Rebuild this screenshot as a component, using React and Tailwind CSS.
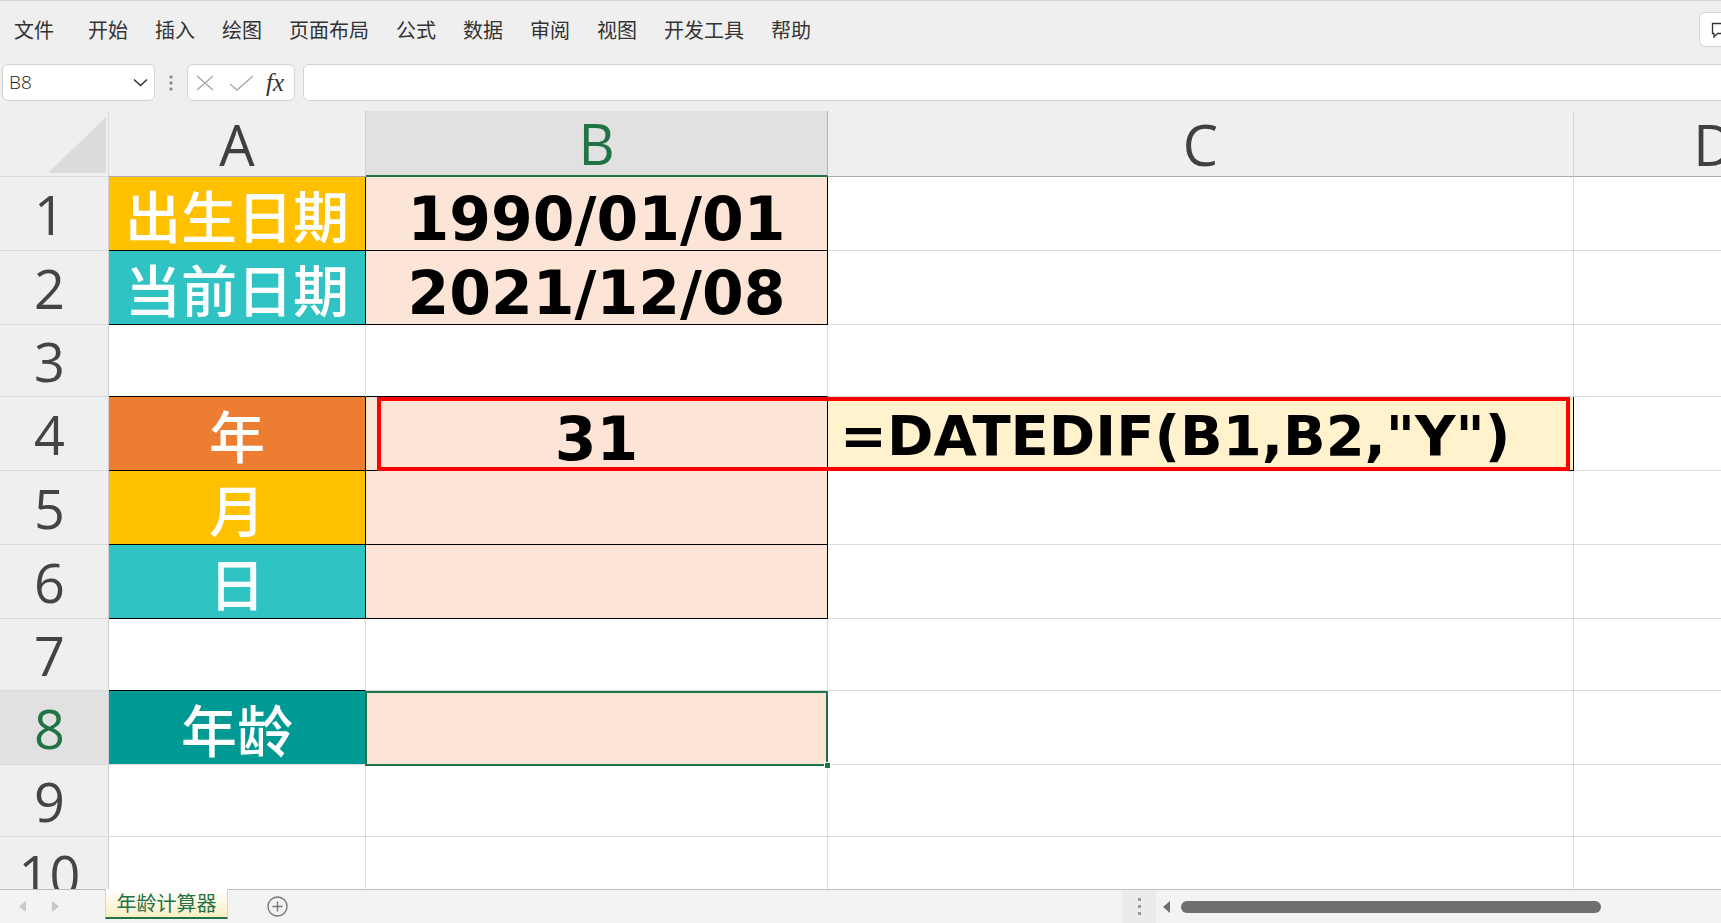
import React from "react";

const cjk = "font-['Noto_Sans_CJK_SC',sans-serif]";
const label =
  "flex items-center justify-center text-white font-['Noto_Sans_CJK_SC',sans-serif] font-medium text-[56px] leading-none";
const num =
  "flex items-center justify-center pt-[10px] text-black font-['DejaVu_Sans',sans-serif] font-bold text-[60px] leading-none";

function RowHeader({ n, active }) {
  return (
    <div
      className={`w-[109px] shrink-0 h-full flex items-center justify-center pr-[9px] border-r border-b border-r-[#cfcfcf] border-b-[#d9d9d9] font-['Open_Sans',sans-serif] text-[54px] leading-none ${
        active ? "bg-[#e1e1e1] text-[#217346]" : "bg-[#efefef] text-[#444444]"
      }`}
    >
      {n}
    </div>
  );
}

function Cell({ w, cls, children }) {
  return <div className={`${w} shrink-0 h-full border-r border-b ${cls}`}>{children}</div>;
}

const G = "border-r-[#dadada] border-b-[#dadada] bg-white";
const GB = "border-r-[#dadada] border-b-black bg-white";

function Row({ h, n, active, a, b, c }) {
  return (
    <div className={`flex ${h} shrink-0`}>
      <RowHeader n={n} active={active} />
      {a}
      {b}
      {c || <Cell w="w-[746px]" cls={G} />}
      <Cell w="w-[300px]" cls={G} />
    </div>
  );
}

export default function App() {
  return (
    <div className={`w-[1721px] h-[923px] overflow-hidden bg-[#efefef] flex flex-col ${cjk}`}>
      {/* Menu bar */}
      <div className="h-[58px] shrink-0 border-t border-[#d6d6d6] flex items-center pl-[14px] text-[20px] text-[#333333] gap-[27px]">
        <span className="mr-[7px]">文件</span>
        <span>开始</span>
        <span>插入</span>
        <span>绘图</span>
        <span>页面布局</span>
        <span>公式</span>
        <span>数据</span>
        <span>审阅</span>
        <span>视图</span>
        <span>开发工具</span>
        <span>帮助</span>
        <div className="ml-auto -mr-[20px] w-[42px] h-[35px] bg-white border border-[#d4d4d4] rounded-[6px] flex items-center pl-[11px]">
          <svg width="18" height="18" viewBox="0 0 18 18" fill="none" stroke="#333" strokeWidth="1.3">
            <path d="M1.5 2.5h15v10h-10l-3.5 3.5v-3.5h-1.5z" />
          </svg>
        </div>
      </div>

      {/* Formula bar */}
      <div className="mt-[6px] h-[37px] shrink-0 flex items-stretch">
        <div className="ml-[2px] w-[153px] bg-white border border-[#d4d4d4] rounded-[6px] flex items-center pl-[6px] pr-[6px]">
          <span className="font-['Open_Sans',sans-serif] font-light text-[19px] text-[#222] leading-none">B8</span>
          <svg className="ml-auto" width="15" height="9" viewBox="0 0 15 9" fill="none" stroke="#333" strokeWidth="1.6">
            <path d="M1 1.5l6.5 6 6.5-6" />
          </svg>
        </div>
        <div className="w-[32px] flex items-center justify-center">
          <svg width="4" height="16" viewBox="0 0 4 16" fill="#8a8a8a">
            <rect x="0.5" y="0.5" width="3" height="3" rx="1" />
            <rect x="0.5" y="6.5" width="3" height="3" rx="1" />
            <rect x="0.5" y="12.5" width="3" height="3" rx="1" />
          </svg>
        </div>
        <div className="w-[108px] bg-white border border-[#d4d4d4] rounded-[6px] flex items-center">
          <svg className="ml-[8px]" width="18" height="16" viewBox="0 0 18 16" fill="none" stroke="#a8a8a8" strokeWidth="1.4">
            <path d="M1 1l16 14M17 1L1 15" />
          </svg>
          <svg className="ml-[15px]" width="25" height="16" viewBox="0 0 25 16" fill="none" stroke="#a8a8a8" strokeWidth="1.4">
            <path d="M1 9l7 6L24 1" />
          </svg>
          <span className="ml-[12px] font-['Liberation_Serif',serif] italic text-[25px] text-[#333] leading-none">
            fx
          </span>
        </div>
        <div className="ml-[8px] flex-1 -mr-[6px] bg-white border border-[#d4d4d4] rounded-[6px]" />
      </div>

      {/* Grid */}
      <div className="mt-[10px] h-[778px] shrink-0 overflow-hidden flex flex-col">
        {/* column headers */}
        <div className="flex h-[66px] shrink-0 font-['Open_Sans',sans-serif] text-[56px] leading-none text-[#404040]">
          <div className="w-[109px] shrink-0 h-full border-r border-b border-[#d9d9d9] bg-[#efefef] relative">
            <svg className="absolute left-0 top-0" width="109" height="66" viewBox="0 0 109 66">
              <path d="M48 62L106 6V62Z" fill="#dcdcdc" />
            </svg>
          </div>
          <div className="w-[257px] shrink-0 h-full border-r border-b border-r-[#cfcfcf] border-b-[#ababab] bg-[#efefef] flex items-center justify-center">
            A
          </div>
          <div className="w-[462px] shrink-0 h-full border-r border-b-2 border-r-[#b5b5b5] border-b-[#217346] bg-[#e1e1e1] flex items-center justify-center text-[#217346]">
            B
          </div>
          <div className="w-[746px] shrink-0 h-full border-r border-b border-r-[#d4d4d4] border-b-[#ababab] bg-[#efefef] flex items-center justify-center">
            C
          </div>
          <div className="w-[300px] shrink-0 h-full border-r border-b border-r-[#d4d4d4] border-b-[#ababab] bg-[#efefef] flex items-center justify-center pr-[20px]">
            D
          </div>
        </div>

        <Row
          h="h-[74px]"
          n="1"
          a={
            <Cell w="w-[257px]" cls={`border-black bg-[#ffc000] ${label}`}>
              出生日期
            </Cell>
          }
          b={
            <Cell w="w-[462px]" cls={`border-black bg-[#fce4d6] ${num}`}>
              1990/01/01
            </Cell>
          }
        />
        <Row
          h="h-[74px]"
          n="2"
          a={
            <Cell w="w-[257px]" cls={`border-black bg-[#2fc4c3] ${label}`}>
              当前日期
            </Cell>
          }
          b={
            <Cell w="w-[462px]" cls={`border-black bg-[#fce4d6] ${num}`}>
              2021/12/08
            </Cell>
          }
        />
        <Row
          h="h-[72px]"
          n="3"
          a={<Cell w="w-[257px]" cls={GB} />}
          b={<Cell w="w-[462px]" cls={GB} />}
        />
        <Row
          h="h-[74px]"
          n="4"
          a={
            <Cell w="w-[257px]" cls={`border-black bg-[#ed7d31] ${label}`}>
              年
            </Cell>
          }
          b={
            <Cell w="w-[462px]" cls={`border-black bg-[#fce4d6] relative ${num}`}>
              31
              <div className="absolute left-[11px] top-0 w-[1193px] h-[74px] border-[4px] border-[#ff0000] z-10 pointer-events-none" />
            </Cell>
          }
          c={
            <Cell
              w="w-[746px]"
              cls="border-black bg-[#fff2cc] flex items-center pl-[12px] pt-[4px] font-['DejaVu_Sans',sans-serif] font-bold text-[56px] leading-none text-black whitespace-nowrap"
            >
              =DATEDIF(B1,B2,"Y")
            </Cell>
          }
        />
        <Row
          h="h-[74px]"
          n="5"
          a={
            <Cell w="w-[257px]" cls={`border-black bg-[#ffc000] ${label}`}>
              月
            </Cell>
          }
          b={<Cell w="w-[462px]" cls="border-black bg-[#fce4d6]" />}
        />
        <Row
          h="h-[74px]"
          n="6"
          a={
            <Cell w="w-[257px]" cls={`border-black bg-[#2fc4c3] ${label}`}>
              日
            </Cell>
          }
          b={<Cell w="w-[462px]" cls="border-black bg-[#fce4d6]" />}
        />
        <Row
          h="h-[72px]"
          n="7"
          a={<Cell w="w-[257px]" cls={GB} />}
          b={<Cell w="w-[462px]" cls={G} />}
        />
        <Row
          h="h-[74px]"
          n="8"
          active
          a={
            <Cell w="w-[257px]" cls={`border-r-[#009994] border-b-[#dadada] bg-[#009994] ${label}`}>
              年龄
            </Cell>
          }
          b={
            <Cell w="w-[462px]" cls="border-r-[#dadada] border-b-[#dadada] bg-[#fce4d6] relative">
              <div className="absolute left-[-1px] top-0 w-[463px] h-[75px] border-2 border-[#217346] z-10" />
              <div className="absolute right-[-4px] bottom-[-5px] w-[7px] h-[7px] bg-[#217346] border border-white z-20" />
            </Cell>
          }
        />
        <Row
          h="h-[72px]"
          n="9"
          a={<Cell w="w-[257px]" cls={G} />}
          b={<Cell w="w-[462px]" cls={G} />}
        />
        <Row
          h="h-[74px]"
          n="10"
          a={<Cell w="w-[257px]" cls={G} />}
          b={<Cell w="w-[462px]" cls={G} />}
        />
      </div>

      {/* Sheet tab bar */}
      <div className="h-[34px] shrink-0 bg-[#f3f3f3] border-t border-[#bdbdbd] flex items-stretch">
        <div className="w-[105px] flex items-center">
          <svg className="ml-[19px]" width="7" height="11" viewBox="0 0 7 11" fill="#c8c8c8">
            <path d="M7 0L0 5.5 7 11Z" />
          </svg>
          <svg className="ml-[26px]" width="7" height="11" viewBox="0 0 7 11" fill="#c8c8c8">
            <path d="M0 0l7 5.5L0 11Z" />
          </svg>
        </div>
        <div className="-mt-px w-[123px] h-[30px] bg-gradient-to-b from-white to-[#fbeec3] border-x border-[#d4d4d4] border-b-2 border-b-[#217346] flex items-center justify-center text-[20px] leading-none text-[#217346]">
          年龄计算器
        </div>
        <div className="ml-[39px] flex items-center">
          <svg width="21" height="21" viewBox="0 0 21 21" fill="none" stroke="#777" strokeWidth="1.4">
            <circle cx="10.5" cy="10.5" r="9.5" />
            <path d="M10.5 5.5v10M5.5 10.5h10" />
          </svg>
        </div>
        <div className="flex-1" />
        <div className="w-[34px] bg-[#ebebeb] flex items-center justify-center">
          <svg width="3" height="17" viewBox="0 0 3 17" fill="#9a9a9a">
            <rect x="0" y="0" width="3" height="3" />
            <rect x="0" y="7" width="3" height="3" />
            <rect x="0" y="14" width="3" height="3" />
          </svg>
        </div>
        <div className="w-[565px] flex items-center">
          <svg className="ml-[7px]" width="7" height="12" viewBox="0 0 7 12" fill="#6e6e6e">
            <path d="M7 0L0 6 7 12Z" />
          </svg>
          <div className="ml-[11px] w-[420px] h-[12px] rounded-full bg-[#6e6e6e]" />
        </div>
      </div>
    </div>
  );
}
